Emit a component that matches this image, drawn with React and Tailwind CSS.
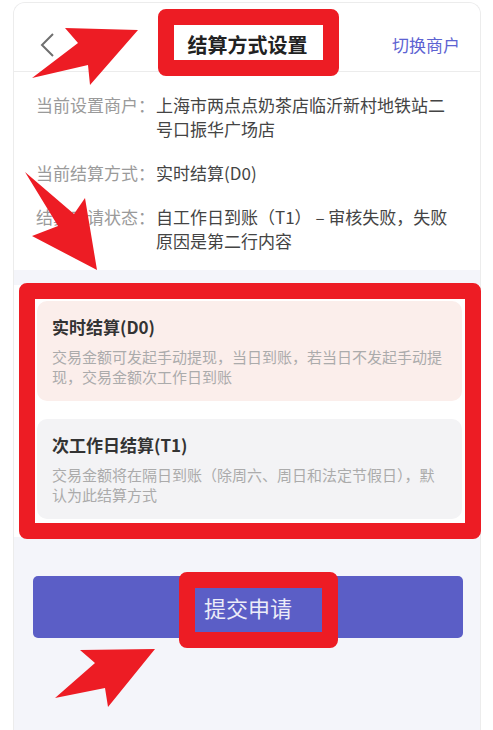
import React from 'react'

const font = { fontFamily: '"Noto Sans CJK SC", "Noto Sans", sans-serif' }

const InfoRow = ({ label, children }) => (
    <div className="flex text-[17px] leading-[24px]">
        <div className="w-[120px] shrink-0 text-[#9a9a9a]">{label}：</div>
        <div className="flex-1 text-[#444]">{children}</div>
    </div>
)

const Option = ({ title, desc, active }) => (
    <div className={`rounded-[10px] pl-[15px] pr-[15px] pt-[14px] pb-[14px] ${active ? 'bg-[#fbeeeb]' : 'bg-[#f3f3f5]'}`}>
        <div className="text-[17px] leading-[24px] font-semibold text-[#333]">{title}</div>
        <div className="mt-[8px] text-[15px] leading-[20px] text-[#ababab]">{desc}</div>
    </div>
)

export default function App() {
    return (
        <div className="relative w-[493px] h-[730px] overflow-hidden bg-white" style={font}>
            <div className="ml-[13px] mt-[2px] w-[468px] h-[728px] flex flex-col rounded-t-[12px] border border-b-0 border-[#ececec] overflow-hidden bg-[#f4f5fa]">
                {/* header */}
                <div className="h-[69px] shrink-0 flex items-center justify-between bg-white border-b border-[#ececec] px-[24px] pt-[16px]">
                    <svg width="16" height="24" viewBox="0 0 16 24" className="ml-[1px]">
                        <polyline points="14,1 3,12 14,23" fill="none" stroke="#6f6f6f" strokeWidth="2" />
                    </svg>
                    <div className="text-[20px] font-bold text-[#222] ml-[48px]">结算方式设置</div>
                    <div className="text-[17px] text-[#5d63d2] mr-[-4px]">切换商户</div>
                </div>

                {/* info */}
                <div className="bg-white pl-[22px] pr-[20px] pt-[21px] pb-[17px] flex flex-col gap-[20px]">
                    <InfoRow label="当前设置商户">上海市两点点奶茶店临沂新村地铁站二号口振华广场店</InfoRow>
                    <InfoRow label="当前结算方式">实时结算(D0)</InfoRow>
                    <InfoRow label="结算申请状态">自工作日到账（T1） – 审核失败，失败原因是第二行内容</InfoRow>
                </div>

                {/* options */}
                <div className="mt-[15px] bg-white pl-[23px] pr-[18px] pt-[16px] pb-[18px] flex flex-col gap-[18px]">
                    <Option
                        active
                        title="实时结算(D0)"
                        desc="交易金额可发起手动提现，当日到账，若当日不发起手动提现，交易金额次工作日到账"
                    />
                    <Option
                        title="次工作日结算(T1)"
                        desc="交易金额将在隔日到账（除周六、周日和法定节假日），默认为此结算方式"
                    />
                </div>

                <div className="px-[19px] mt-[39px]">
                    <button className="w-[430px] h-[62px] rounded-[5px] bg-[#5b5ec6] text-[22px] text-[#ececf8]">
                        提交申请
                    </button>
                </div>
            </div>

            {/* annotations */}
            <svg className="absolute left-0 top-0 pointer-events-none" width="493" height="730" viewBox="0 0 493 730">
                <g fill="none" stroke="#ed1c24" strokeWidth="16" strokeLinejoin="round">
                    <rect x="166" y="17" width="165" height="51" />
                    <rect x="27" y="291" width="446" height="240" />
                    <rect x="187" y="580" width="143" height="60" />
                </g>
                <g fill="#ed1c24">
                    <polygon points="65,28 138,30 90,85 88,65 32,78 78,43" />
                    <polygon points="25,172 74,214 85,198 97,270 32,236 58,226" />
                    <polygon points="80,650 155,649 108,707 105,688 55,698 95,663" />
                </g>
            </svg>
        </div>
    )
}
